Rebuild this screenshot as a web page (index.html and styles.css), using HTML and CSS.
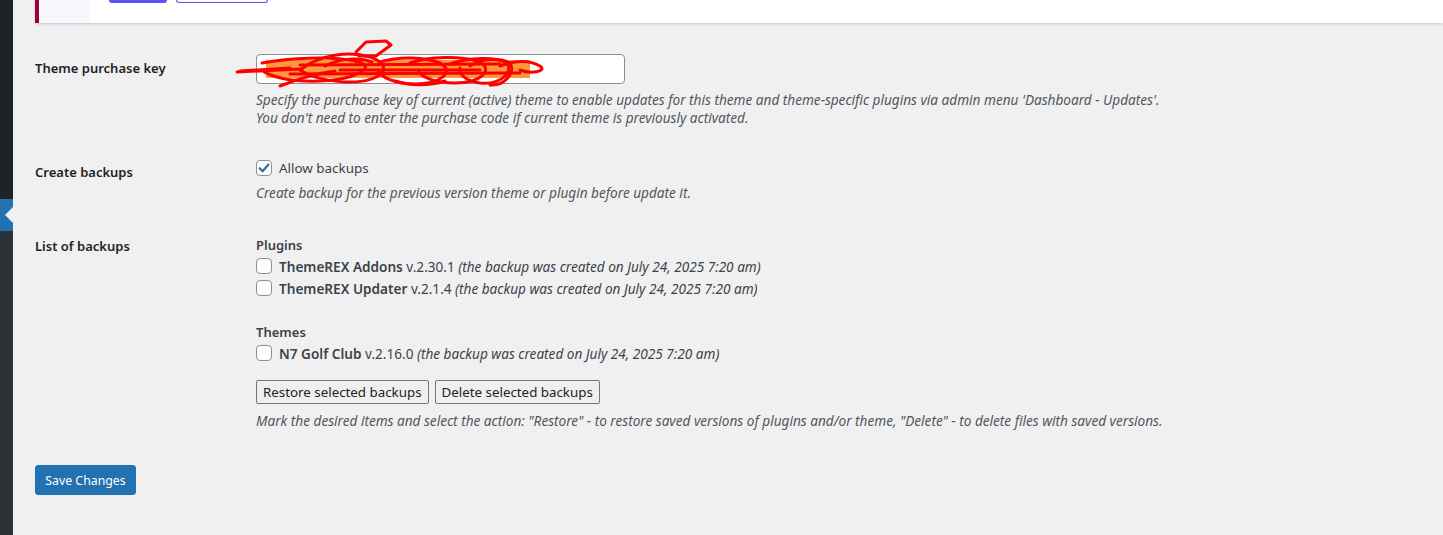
FILE: index.html
```html
<!DOCTYPE html>
<html lang="en">
<head>
<meta charset="utf-8">
<title>Theme Updater Settings</title>
<link rel="stylesheet" href="styles.css">
</head>
<body>
<div class="layout">
  <aside class="sidebar">
    <div class="side-top"></div>
    <div class="side-active"><span class="side-arrow"></span></div>
    <div class="side-sub"></div>
  </aside>
  <main class="content">
    <div class="notice">
      <div class="notice-side"></div>
      <div class="notice-actions">
        <span class="nbtn nbtn-fill"></span>
        <span class="nbtn nbtn-outline"></span>
      </div>
    </div>

    <form class="form">
      <div class="row row-key">
        <div class="th"><label class="lbl">Theme purchase key</label></div>
        <div class="td">
          <div class="key-wrap">
            <input class="key-input" type="text" value="">
            <svg class="scribble" viewBox="230 38 320 56" width="320" height="56" aria-hidden="true">
              <rect x="266" y="60" width="264" height="18" fill="#fb9a3c"/>
              <g fill="none" stroke="#ff0000" stroke-width="3" stroke-linecap="round" stroke-linejoin="round">
                <path d="M237 72 L300 69"/>
                <path d="M240 71 L290 68"/>
                <path d="M356 52 L366 42 L386 41 L391 45 L376 56 L359 56 Z"/>
                <path d="M262 63 C290 58 330 56 355 61 C382 67 352 80 320 81 C290 82 270 77 262 70"/>
                <path d="M300 70 C320 54 350 51 370 57 C396 66 382 82 350 82 C330 82 310 77 300 70"/>
                <path d="M325 66 C340 58 360 57 372 62"/>
                <path d="M280 86 C300 78 320 73 335 71"/>
                <path d="M380 62 C400 56 425 57 440 63 C456 72 440 84 415 84 C395 84 380 77 378 70"/>
                <path d="M410 63 C430 56 460 56 478 61 C496 70 480 83 455 83 C435 83 420 77 418 70"/>
                <path d="M450 64 C470 57 495 57 505 62 C516 70 502 85 480 83 C465 81 458 73 460 68"/>
                <path d="M470 66 C480 59 500 57 510 63 C516 72 505 86 490 85"/>
                <path d="M500 66 C515 60 530 60 540 66 C548 72 530 74 520 70"/>
                <path d="M340 70 L480 70"/>
                <path d="M290 74 L520 73"/>
                <path d="M300 65 L500 64"/>
                <path d="M395 81 C410 86 430 86 445 81"/>
              </g>
            </svg>
          </div>
          <p class="desc">Specify the purchase key of current (active) theme to enable updates for this theme and theme-specific plugins via admin menu 'Dashboard - Updates'.<br>You don't need to enter the purchase code if current theme is previously activated.</p>
        </div>
      </div>

      <div class="row row-backup">
        <div class="th"><label class="lbl">Create backups</label></div>
        <div class="td">
          <label class="check-line"><span class="cb cb-on"><svg viewBox="0 0 16 16" width="16" height="16"><path d="M3.6 8.2 L6.6 11.2 L12.4 4.6" fill="none" stroke="#2271b1" stroke-width="2.2" stroke-linecap="round" stroke-linejoin="round"/></svg></span>Allow backups</label>
          <p class="desc desc-tight">Create backup for the previous version theme or plugin before update it.</p>
        </div>
      </div>

      <div class="row row-list">
        <div class="th"><label class="lbl">List of backups</label></div>
        <div class="td">
          <div class="group-title">Plugins</div>
          <div class="item"><span class="cb"></span><b>ThemeREX Addons</b>&nbsp;v.2.30.1&nbsp;<i>(the backup was created on July 24, 2025 7:20 am)</i></div>
          <div class="item"><span class="cb"></span><b>ThemeREX Updater</b>&nbsp;v.2.1.4&nbsp;<i>(the backup was created on July 24, 2025 7:20 am)</i></div>
          <div class="group-title group-gap">Themes</div>
          <div class="item"><span class="cb"></span><b>N7 Golf Club</b>&nbsp;v.2.16.0&nbsp;<i>(the backup was created on July 24, 2025 7:20 am)</i></div>
          <div class="actions">
            <button type="button" class="plain-btn">Restore selected backups</button>
            <button type="button" class="plain-btn">Delete selected backups</button>
          </div>
          <p class="desc desc-actions">Mark the desired items and select the action: "Restore" - to restore saved versions of plugins and/or theme, "Delete" - to delete files with saved versions.</p>
        </div>
      </div>

      <div class="submit">
        <button type="button" class="primary">Save Changes</button>
      </div>
    </form>
  </main>
</div>
</body>
</html>
```

FILE: styles.css
```css
* { box-sizing: border-box; }
html, body { margin: 0; padding: 0; }
body {
  background: #f0f0f1;
  font-family: "Noto Sans", "Open Sans", sans-serif;
  color: #3c434a;
  font-size: 13px;
  height: 535px;
  overflow: hidden;
}
.layout { display: flex; min-height: 535px; }
.sidebar {
  width: 13px;
  flex: 0 0 13px;
  display: flex;
  flex-direction: column;
  background: #1d2327;
}
.side-top { height: 199px; background: #1d2327; }
.side-active {
  height: 32px;
  background: #2271b1;
  position: relative;
}
.side-arrow {
  position: absolute;
  right: 0;
  top: 8px;
  width: 0; height: 0;
  border-top: 8px solid transparent;
  border-bottom: 8px solid transparent;
  border-right: 8px solid #f0f0f1;
}
.side-sub { flex: 1; background: #2c3338; }

.content { flex: 1; padding-left: 22px; }

.notice {
  height: 23px;
  background: #fff;
  border-left: 4px solid #99003d;
  display: flex;
  box-shadow: 0 1px 3px rgba(0,0,0,0.18);
}
.notice-side { width: 50px; background: #f6f8fd; }
.notice-actions { display: flex; gap: 9px; padding-left: 20px; align-items: flex-start; }
.nbtn { display: block; height: 3px; border-radius: 0 0 4px 4px; }
.nbtn-fill { width: 58px; background: #5b50fd; }
.nbtn-outline { width: 92px; border: 1px solid #5b50fd; border-top: 0; background: #fff; }

.form { padding-top: 31px; }
.row { display: flex; }
.th { width: 221px; flex: 0 0 221px; }
.td { flex: 1; }
.lbl {
  font-size: 13px;
  font-weight: 600;
  color: #1d2327;
  line-height: 20px;
  display: block;
}
.row-key .lbl { padding-top: 4px; }
.key-wrap { position: relative; width: 369px; }
.key-input {
  display: block;
  width: 369px;
  height: 30px;
  border: 1px solid #8c8f94;
  border-radius: 4px;
  background: #fff;
  margin: 0;
}
.scribble {
  position: absolute;
  left: -26px;
  top: -16px;
  pointer-events: none;
}
.desc {
  margin: 7px 0 0;
  font-style: italic;
  font-size: 13.6px;
  line-height: 18px;
  color: #50575e;
  white-space: nowrap;
}
.row-backup { margin-top: 31px; }
.row-backup .lbl { padding-top: 4px; }
.check-line {
  display: flex;
  align-items: center;
  height: 20px;
  font-size: 13.4px;
  color: #3c434a;
}
.cb {
  width: 16px; height: 16px;
  border: 1px solid #8c8f94;
  border-radius: 4px;
  background: #fff;
  margin-right: 7px;
  flex: 0 0 16px;
  display: inline-flex;
}
.cb svg { margin: -1px; }
.desc-tight { margin-top: 6px; }

.row-list { margin-top: 33px; }
.row-list .lbl { padding-top: 1px; }
.group-title {
  font-size: 13px;
  font-weight: 600;
  line-height: 20px;
  color: #3c434a;
}
.group-gap { margin-top: 23px; }
.item {
  display: flex;
  align-items: center;
  height: 22px;
  font-size: 13.6px;
  white-space: nowrap;
  color: #3c434a;
}
.item b { font-weight: 600; }
.item i { font-style: italic; }
.actions { display: flex; gap: 6px; margin-top: 16px; }
.plain-btn {
  font-family: inherit;
  font-size: 13.333px;
  color: #1d2327;
  height: 24px;
  padding: 0 6px;
  border: 1px solid #767676;
  border-radius: 2px;
  background: #efefef;
  line-height: 20px;
}
.desc-actions { margin-top: 8px; }

.submit { padding-top: 35px; }
.primary {
  font-family: inherit;
  font-size: 12.3px;
  color: #fff;
  background: #2271b1;
  border: 1px solid #2271b1;
  border-radius: 3px;
  height: 30px;
  width: 101px;
  padding: 0;
}
```
